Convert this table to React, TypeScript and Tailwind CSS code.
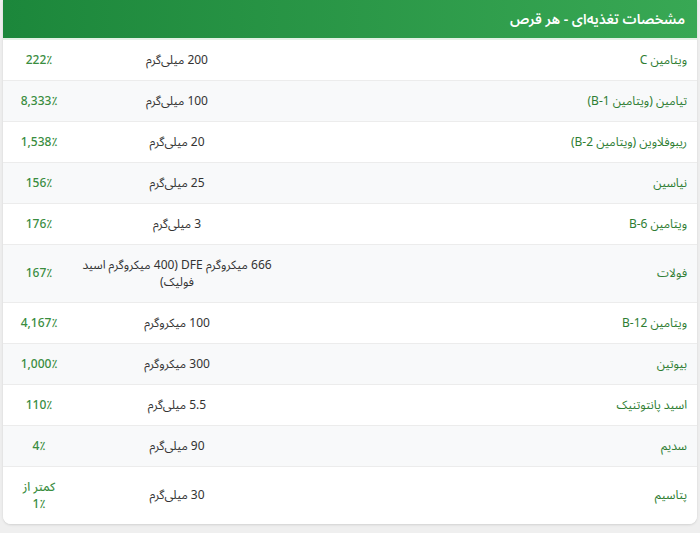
const rows: { name: string; amount: string; dv: string }[] = [
  { name: 'ویتامین C', amount: '200 میلی‌گرم', dv: '222٪' },
  { name: 'تیامین (ویتامین B-1)', amount: '100 میلی‌گرم', dv: '8,333٪' },
  { name: 'ریبوفلاوین (ویتامین B-2)', amount: '20 میلی‌گرم', dv: '1,538٪' },
  { name: 'نیاسین', amount: '25 میلی‌گرم', dv: '156٪' },
  { name: 'ویتامین B-6', amount: '3 میلی‌گرم', dv: '176٪' },
  { name: 'فولات', amount: '666 میکروگرم DFE (400 میکروگرم اسید فولیک)', dv: '167٪' },
  { name: 'ویتامین B-12', amount: '100 میکروگرم', dv: '4,167٪' },
  { name: 'بیوتین', amount: '300 میکروگرم', dv: '1,000٪' },
  { name: 'اسید پانتوتنیک', amount: '5.5 میلی‌گرم', dv: '110٪' },
  { name: 'سدیم', amount: '90 میلی‌گرم', dv: '4٪' },
  { name: 'پتاسیم', amount: '30 میلی‌گرم', dv: 'کمتر از ٪1' },
]

export default function App() {
  return (
    <div className="min-h-screen bg-[#efefef] px-[3px] pb-2 font-['Noto_Sans_Arabic','Noto_Sans',sans-serif]" dir="rtl">
      <div className="bg-white rounded-b-lg overflow-hidden shadow-sm">
        {/* Header */}
        <div className="h-[40px] flex items-center px-3 bg-gradient-to-l from-[#38a854] to-[#1c873b] border-b-2 border-[#e3f1e5]">
          <h2 className="text-white text-[14px] font-semibold">مشخصات تغذیه‌ای - هر قرص</h2>
        </div>

        <table className="w-full border-collapse text-[12px] leading-[17px]">
          <tbody>
            {rows.map((r, i) => (
              <tr key={i} className={`border-b border-[#ececec] last:border-b-0 ${i % 2 === 1 ? 'bg-[#f8f9fa]' : 'bg-white'}`}>
                <td className="py-[11.5px] pr-[10px] pl-3 text-right text-[#2e7d32]">{r.name}</td>
                <td className="py-[11.5px] px-1.5 w-[204px] text-center text-[#333]">{r.amount}</td>
                <td className="py-[11.5px] px-3 w-[72px] text-center text-[#3a8d3f] font-medium">{r.dv}</td>
              </tr>
            ))}
          </tbody>
        </table>
      </div>
    </div>
  )
}
